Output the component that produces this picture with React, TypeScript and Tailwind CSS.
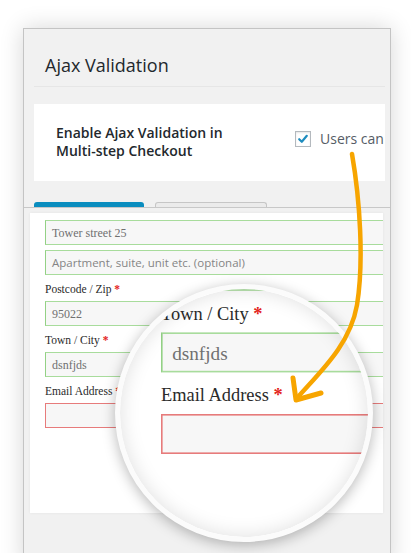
import React from 'react';

const serif = "font-['Liberation_Serif','Times_New_Roman',serif]";
const sans = "font-['Open_Sans','Noto_Sans',sans-serif]";

function Field({ value, placeholder, error }: { value?: string; placeholder?: string; error?: boolean }) {
  return (
    <div
      className={
        'flex h-[25px] w-[340px] items-center border bg-[#f7f7f7] pl-[6px] ' +
        (error ? 'border-[#e77b7b]' : 'border-[#a8dc9c] border-l-[#93d185]')
      }
    >
      {value && <span className="text-[12px] text-[#707070]">{value}</span>}
      {placeholder && <span className={sans + ' text-[11.5px] text-[#858585]'}>{placeholder}</span>}
    </div>
  );
}

function Label({ children }: { children: React.ReactNode }) {
  return (
    <div className="mt-[7px] mb-[5px] h-[14px] text-[11.5px] leading-[14px] text-[#2a2a2a]">
      {children} <span className="font-bold text-[#e3241b]">*</span>
    </div>
  );
}

// the checkout form, drawn once small and once magnified
function CheckoutForm() {
  return (
    <div className={serif + ' h-[300px] w-[353px] overflow-hidden bg-white pt-[7px] pl-[15px]'}>
      <Field value="Tower street 25" />
      <div className="mt-[5px]">
        <Field placeholder="Apartment, suite, unit etc. (optional)" />
      </div>
      <Label>Postcode / Zip</Label>
      <Field value="95022" />
      <Label>Town / City</Label>
      <Field value="dsnfjds" />
      <Label>Email Address</Label>
      <Field error />
    </div>
  );
}

export default function App() {
  return (
    <div className="relative h-[553px] w-[411px] overflow-hidden bg-white">
      {/* settings panel */}
      <div className="ml-[23px] mt-[28px] h-[540px] w-[368px] border border-[#c4c4c4] bg-[#f1f1f1] shadow-[0_0_22px_rgba(0,0,0,0.16)]">
        <div className={sans + ' pl-[21px] pt-[24px] text-[18px] leading-[24px] text-[#23282d]'}>Ajax Validation</div>
        <div className="ml-[10px] mr-[5px] mt-[9px] h-px bg-[#e6e6e6]" />

        <div className={sans + ' ml-[10px] mr-[5px] mt-[17px] flex h-[77px] overflow-hidden bg-white pl-[22px]'}>
          <div className="w-[220px] shrink-0 pt-[19.5px] text-[14px] font-semibold leading-[18px] text-[#23282d]">
            Enable Ajax Validation in
            <br />
            Multi-step Checkout
          </div>
          <div className="ml-[19px] mt-[27px] flex shrink-0 items-start gap-[9px]">
            <div className="flex h-[16px] w-[16px] items-center justify-center border border-[#b4b9be] bg-white shadow-[inset_0_1px_2px_rgba(0,0,0,0.1)]">
              <svg width="12" height="12" viewBox="0 0 12 12">
                <path d="M2.2 6.2 L4.8 8.8 L9.8 2.8" fill="none" stroke="#1e8cbe" strokeWidth="2.2" strokeLinecap="round" strokeLinejoin="round" />
              </svg>
            </div>
            <span className="whitespace-nowrap text-[14px] leading-[16px] text-[#555d66]">Users can</span>
          </div>
        </div>

        {/* tabs */}
        <div className="ml-[10px] mt-[21px] flex h-[5px] gap-[11px]">
          <div className="w-[110px] rounded-t-[3px] bg-[#0a8dbf]" />
          <div className="w-[112px] rounded-t-[3px] border border-b-0 border-[#c6c6c6] bg-[#ebebeb]" />
        </div>
        <div className="h-px bg-[#c8c8c8]" />

        <div className="ml-[6px] mt-[5px] w-[353px] shadow-[0_0_3px_rgba(0,0,0,0.06)]">
          <CheckoutForm />
        </div>
      </div>

      {/* magnifier */}
      <div className="absolute left-[115px] top-[284px] h-[258px] w-[258px] overflow-hidden rounded-full border-[5px] border-[#fbfbfb] bg-white shadow-[0_3px_14px_rgba(0,0,0,0.28)]">
        <div className="absolute left-[17.4px] top-[-179.4px] origin-top-left scale-[1.6]">
          <CheckoutForm />
        </div>
        <div className="pointer-events-none absolute inset-0 rounded-full shadow-[inset_0_0_20px_rgba(0,0,0,0.13)]" />
      </div>

      {/* arrow */}
      <svg className="pointer-events-none absolute left-0 top-0" width="411" height="553" viewBox="0 0 411 553">
        <path
          d="M352 154 C 360 200, 364 262, 357 305 C 350 345, 320 372, 298 397"
          fill="none"
          stroke="#f7a500"
          strokeWidth="4.5"
          strokeLinecap="round"
        />
        <path d="M293 378 L296 400 L321 393" fill="none" stroke="#f7a500" strokeWidth="5" strokeLinecap="round" strokeLinejoin="round" />
      </svg>
    </div>
  );
}
